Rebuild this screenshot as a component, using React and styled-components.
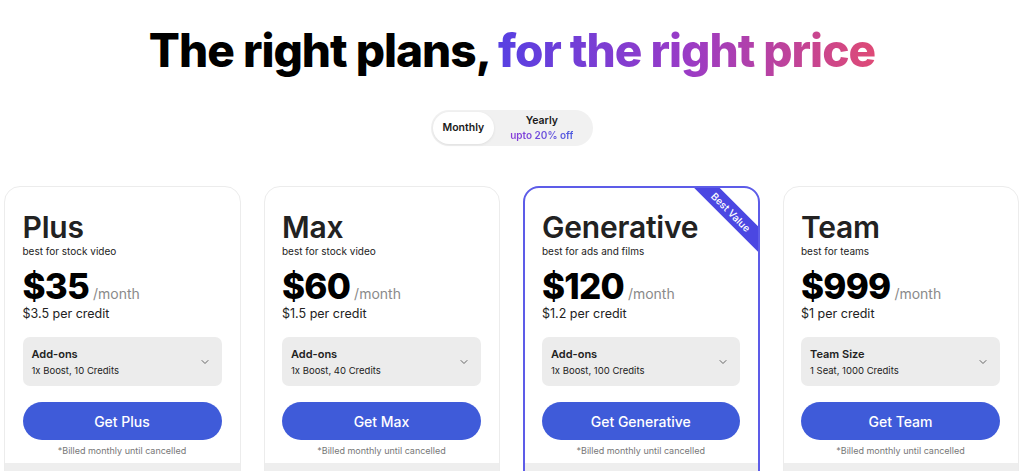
import React from 'react';
import styled, { createGlobalStyle } from 'styled-components';

const GlobalStyle = createGlobalStyle`
	body {
		margin: 0;
		background: #fff;
		font-family: Inter, 'Noto Sans', sans-serif;
		color: #1f1f1f;
	}
`;

// data
const plans = [
	{
		name: 'Plus',
		tagline: 'best for stock video',
		price: '$35',
		perCredit: '$3.5 per credit',
		optionLabel: 'Add-ons',
		optionValue: '1x Boost, 10 Credits',
	},
	{
		name: 'Max',
		tagline: 'best for stock video',
		price: '$60',
		perCredit: '$1.5 per credit',
		optionLabel: 'Add-ons',
		optionValue: '1x Boost, 40 Credits',
	},
	{
		name: 'Generative',
		tagline: 'best for ads and films',
		price: '$120',
		perCredit: '$1.2 per credit',
		optionLabel: 'Add-ons',
		optionValue: '1x Boost, 100 Credits',
		featured: true,
	},
	{
		name: 'Team',
		tagline: 'best for teams',
		price: '$999',
		perCredit: '$1 per credit',
		optionLabel: 'Team Size',
		optionValue: '1 Seat, 1000 Credits',
	},
];

// styles
const Page = styled.main`
	display: flex;
	flex-direction: column;
	align-items: center;
	height: 471px;
	overflow: hidden;
`;

const Heading = styled.h1`
	margin: 22px 0 0;
	font-size: 46px;
	font-weight: 800;
	letter-spacing: -1px;
	line-height: 56px;
	color: #000;
	span {
		background: linear-gradient(90deg, #5740e2 0%, #9a3bc6 50%, #de4a76 100%);
		-webkit-background-clip: text;
		background-clip: text;
		color: transparent;
	}
`;

const Toggle = styled.div`
	display: flex;
	align-items: center;
	margin-top: 32px;
	padding: 2px;
	background: #f1f1f1;
	border-radius: 18px;
	height: 32px;
`;

const ToggleOption = styled.div`
	display: flex;
	flex-direction: column;
	align-items: center;
	justify-content: center;
	height: 32px;
	padding: ${(p) => (p.$active ? '0 10px' : '0 18px 0 16px')};
	border-radius: 16px;
	background: ${(p) => (p.$active ? '#fff' : 'transparent')};
	box-shadow: ${(p) => (p.$active ? '0 1px 3px rgba(0,0,0,0.08)' : 'none')};
	font-size: 10.5px;
	font-weight: 600;
	color: #1a1a1a;
	line-height: 14px;
	small {
		font-size: 10px;
		font-weight: 600;
		background: linear-gradient(90deg, #8a3bd8, #4b5ae0);
		-webkit-background-clip: text;
		background-clip: text;
		color: transparent;
	}
`;

const Grid = styled.section`
	display: grid;
	grid-template-columns: repeat(4, 1fr);
	gap: 23px;
	width: 100%;
	box-sizing: border-box;
	padding: 0 5px 0 4px;
	margin-top: 40px;
`;

const Card = styled.article`
	position: relative;
	overflow: hidden;
	display: flex;
	flex-direction: column;
	border: ${(p) => (p.$featured ? '2px solid #5d5ce8' : '1.5px solid #ececec')};
	border-radius: 16px;
	background: #fff;
	height: 320px;
	box-sizing: border-box;
`;

const Body = styled.div`
	padding: ${(p) => (p.$featured ? '21px 18px 0 17px' : '22px 18px 0 17.5px')};
`;

const Name = styled.h2`
	margin: 0;
	font-size: 30px;
	font-weight: 600;
	line-height: 36px;
	letter-spacing: -0.2px;
	color: #222;
`;

const Tagline = styled.p`
	margin: 0;
	font-size: 10px;
	line-height: 12px;
	color: #222;
`;

const PriceRow = styled.div`
	display: flex;
	align-items: baseline;
	gap: 4px;
	margin-top: 9px;
	strong {
		font-size: 35px;
		font-weight: 800;
		letter-spacing: -0.8px;
		line-height: 40px;
		color: #000;
	}
	span {
		font-size: 14px;
		color: #8a8a8a;
	}
`;

const PerCredit = styled.p`
	margin: 0;
	font-size: 12.5px;
	line-height: 16px;
	color: #222;
`;

const Select = styled.div`
	display: flex;
	align-items: center;
	justify-content: space-between;
	margin-top: 15px;
	height: 49px;
	padding: 0 11px 0 9px;
	background: #ececec;
	border-radius: 7px;
	div {
		display: flex;
		flex-direction: column;
		gap: 4px;
	}
	b {
		font-size: 11px;
		font-weight: 600;
		color: #222;
	}
	span {
		font-size: 9.5px;
		color: #222;
	}
`;

const BuyButton = styled.button`
	display: block;
	width: 100%;
	height: 38px;
	margin-top: 16px;
	border: none;
	border-radius: 19px;
	background: #3f5bd9;
	color: #fff;
	font-family: inherit;
	font-size: 14px;
	font-weight: 500;
`;

const Note = styled.p`
	margin: 5px 0 0;
	text-align: center;
	font-size: 9px;
	line-height: 12px;
	color: #777;
`;

const Footer = styled.div`
	flex: 1;
	margin-top: 6px;
	background: #eeeeee;
`;

const Ribbon = styled.div`
	position: absolute;
	top: 15px;
	right: -33.5px;
	width: 120px;
	height: 18px;
	transform: rotate(45deg);
	background: #4b47e2;
	color: #fff;
	font-size: 10px;
	font-weight: 500;
	line-height: 18px;
	text-align: center;
`;

const Chevron = () => (
	<svg width='12' height='12' viewBox='0 0 24 24' fill='none' stroke='#666' strokeWidth='2' strokeLinecap='round' strokeLinejoin='round'>
		<path d='m6 9 6 6 6-6' />
	</svg>
);

// markup
const PlanCard = ({ plan }) => (
	<Card $featured={plan.featured}>
		{plan.featured && <Ribbon>Best Value</Ribbon>}
		<Body $featured={plan.featured}>
			<Name>{plan.name}</Name>
			<Tagline>{plan.tagline}</Tagline>
			<PriceRow>
				<strong>{plan.price}</strong>
				<span>/month</span>
			</PriceRow>
			<PerCredit>{plan.perCredit}</PerCredit>
			<Select>
				<div>
					<b>{plan.optionLabel}</b>
					<span>{plan.optionValue}</span>
				</div>
				<Chevron />
			</Select>
			<BuyButton>Get {plan.name}</BuyButton>
			<Note>*Billed monthly until cancelled</Note>
		</Body>
		<Footer />
	</Card>
);

const App = () => (
	<>
		<GlobalStyle />
		<Page>
			<Heading>
				The right plans, <span>for the right price</span>
			</Heading>
			<Toggle>
				<ToggleOption $active>Monthly</ToggleOption>
				<ToggleOption>
					Yearly
					<small>upto 20% off</small>
				</ToggleOption>
			</Toggle>
			<Grid>
				{plans.map((plan) => (
					<PlanCard key={plan.name} plan={plan} />
				))}
			</Grid>
		</Page>
	</>
);

export default App;
